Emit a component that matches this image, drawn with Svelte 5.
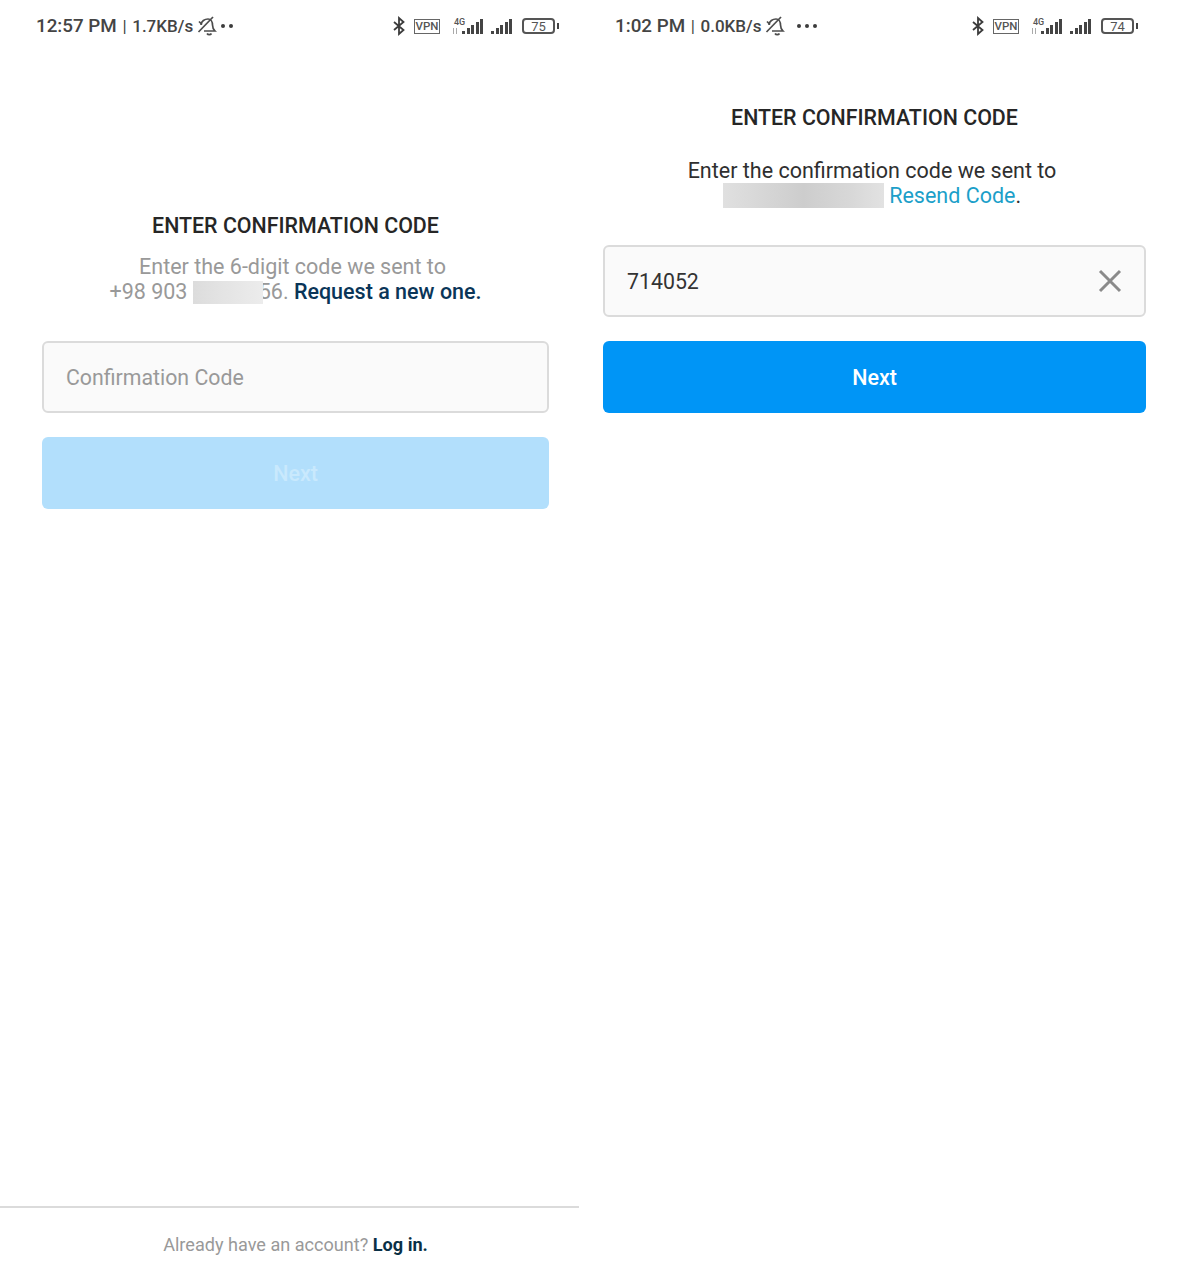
<script>
  const bars = [3, 6, 9, 12, 15];
</script>

{#snippet statusBar(time, speed, battery, dots)}
  <div class="status">
    <span class="clock">{time} <span class="sep">|</span> <span class="speed">{speed}</span></span>
    <svg class="bell" width="21" height="20" viewBox="0 0 21 20" fill="none" stroke="#4c4c4c" stroke-width="1.700">
      <path d="M5 9C5 5 9 3 12 3c3 0 4.500 3 4.500 6 0 3 .5 4 2.500 6H8" />
      <path d="M11 17.500c1 1.500 3.500 1.500 4.500 0" />
      <path d="M17 1 2.500 16" />
      <path d="M3 5.500l3 3" />
    </svg>
    <span class="dots" class:wide={dots === 3}>
      {#each Array(dots) as _}
        <i></i>
      {/each}
    </span>
    <span class="spacer"></span>
    <svg class="bt" width="12" height="20" viewBox="0 0 12 20" fill="none" stroke="#3c3c3c" stroke-width="1.800">
      <path d="M1 6 10.500 14 6 18V2L10.500 6 1 14" />
    </svg>
    <span class="vpn">VPN</span>
    <span class="net">
      <span class="tag">4G</span>
      <svg class="arrows" width="6" height="6" viewBox="0 0 6 6" fill="none" stroke="#aaa" stroke-width="1">
        <path d="M1.500 0v6M4.500 0v6" />
      </svg>
      {@render signal()}
    </span>
    {@render signal()}
    <span class="battery"><span class="level">{battery}</span></span>
    <span class="nub"></span>
  </div>
{/snippet}

{#snippet signal()}
  <span class="signal">
    {#each bars as h}
      <i style:height="{h}px"></i>
    {/each}
  </span>
{/snippet}

<div class="page">
  <section class="phone left">
    {@render statusBar('12:57 PM', '1.7KB/s', 75, 2)}
    <div class="content first">
      <h1>ENTER CONFIRMATION CODE</h1>
      <p class="muted">
        Enter the 6-digit code we sent to<br />
        <span class="line2">+98 903 <span class="redact short"></span><span class="tuck">56.</span> <a href="#top">Request a new one.</a></span>
      </p>
      <div class="field"><span class="placeholder">Confirmation Code</span></div>
      <button class="next" disabled>Next</button>
    </div>
    <footer>Already have an account? <a href="#top">Log in.</a></footer>
  </section>

  <section class="phone right">
    {@render statusBar('1:02 PM', '0.0KB/s', 74, 3)}
    <div class="content second">
      <h1>ENTER CONFIRMATION CODE</h1>
      <p class="dark">
        Enter the confirmation code we sent to<br />
        <span class="redact long"></span> <a href="#top">Resend Code</a>.
      </p>
      <div class="field">
        <span class="value">714052</span>
        <svg width="24" height="24" viewBox="0 0 24 24" stroke="#8a8a8a" stroke-width="3" fill="none">
          <path d="M2 2l20 20M22 2 2 22" />
        </svg>
      </div>
      <button class="next">Next</button>
    </div>
  </section>
</div>

<style>
  :global(body) {
    background: #fff;
  }

  .page {
    display: flex;
    width: 1177px;
    height: 1280px;
    font-family: Roboto, "Liberation Sans", sans-serif;
    overflow: hidden;
  }

  .phone {
    display: flex;
    flex-direction: column;
    flex: none;
    width: 579px;
    height: 1280px;
  }

  .status {
    display: flex;
    align-items: center;
    height: 52px;
    padding: 0 20px 0 36px;
    color: #444;
    flex: none;
  }

  .clock {
    font-size: 18.800px;
    font-weight: 500;
    white-space: nowrap;
  }

  .sep {
    margin: 0 1px;
    font-size: 17px;
    font-weight: 400;
  }

  .speed {
    font-size: 17px;
  }

  .bell {
    margin-left: 3px;
    flex: none;
  }

  .dots {
    display: flex;
    gap: 4px;
    margin-left: 4px;
  }

  .dots.wide {
    margin-left: 12px;
  }

  .dots i {
    width: 4px;
    height: 4px;
    border-radius: 50%;
    background: #3c3c3c;
  }

  .spacer {
    flex: 1;
  }

  .vpn {
    box-sizing: border-box;
    width: 26px;
    height: 15px;
    margin-left: 9px;
    border: 1.500px solid #666;
    font-size: 11.500px;
    font-weight: 500;
    line-height: 12px;
    text-align: center;
    color: #555;
  }

  .net {
    position: relative;
    display: flex;
    justify-content: flex-end;
    width: 31px;
    margin: 0 8px 0 12px;
  }

  .tag {
    position: absolute;
    left: 2px;
    top: -1px;
    font-size: 9px;
    line-height: 9px;
    font-weight: 500;
    color: #555;
  }

  .arrows {
    position: absolute;
    left: 0;
    bottom: 0;
  }

  .signal {
    display: flex;
    align-items: flex-end;
    gap: 1.500px;
    height: 15px;
  }

  .signal i {
    width: 3px;
    background: #444;
  }

  .battery {
    box-sizing: border-box;
    display: flex;
    align-items: center;
    justify-content: center;
    width: 33px;
    height: 16px;
    margin-left: 10px;
    border: 2px solid #555;
    border-radius: 4px;
  }

  .level {
    font-size: 13px;
    color: #555;
  }

  .nub {
    width: 2px;
    height: 6px;
    margin-left: 2px;
    background: #444;
  }

  .content {
    display: flex;
    flex-direction: column;
    flex: 1;
  }

  .content.first {
    padding: 162px 30px 0 42px;
  }

  .content.second {
    padding: 54px 12px 0 24px;
  }

  h1 {
    margin: 0;
    font-size: 21.400px;
    font-weight: 500;
    line-height: 24px;
    text-align: center;
    color: #262626;
  }

  p {
    margin: 16px 0 37px;
    font-size: 21.500px;
    line-height: 25px;
    text-align: center;
  }

  .muted {
    color: #999;
    margin-right: 6px;
  }

  .line2 {
    display: inline-block;
    margin-left: 6px;
  }

  .muted a {
    font-weight: 500;
    color: #0a3558;
    text-decoration: none;
  }

  .dark {
    color: #2f2f2f;
    margin-top: 28px;
    margin-right: 5px;
  }

  .dark a {
    color: #1c9fc9;
    text-decoration: none;
  }

  .redact {
    display: inline-block;
    vertical-align: -5px;
  }

  .redact.short {
    position: relative;
    z-index: 1;
    width: 70px;
    height: 23px;
    background: linear-gradient(90deg, #dcdcdc, #e4e4e4 45%, #ececec);
  }

  .redact.long {
    width: 161px;
    height: 25px;
    background: linear-gradient(90deg, #e0e0e0, #cdcdcd 50%, #d8d8d8 80%, #e2e2e2);
  }

  .tuck {
    margin-left: -4px;
  }

  .field {
    box-sizing: border-box;
    display: flex;
    align-items: center;
    justify-content: space-between;
    height: 72px;
    padding: 0 22px;
    background: #fafafa;
    border: 2px solid #dbdbdb;
    border-radius: 6px;
    font-size: 21.300px;
  }

  .placeholder {
    color: #999;
  }

  .value {
    color: #333;
  }

  .next {
    height: 72px;
    margin-top: 24px;
    padding: 0;
    border: none;
    border-radius: 6px;
    background: #0095f6;
    color: #fff;
    font-family: inherit;
    font-size: 21.500px;
    font-weight: 500;
  }

  .next:disabled {
    background: #b2dffc;
    color: #c9e9fd;
  }

  footer {
    flex: none;
    height: 72px;
    padding-left: 12px;
    border-top: 2px solid #dbdbdb;
    font-size: 18.100px;
    line-height: 74px;
    text-align: center;
    color: #999;
  }

  footer a {
    font-weight: 700;
    color: #0a3046;
    text-decoration: none;
  }
</style>
